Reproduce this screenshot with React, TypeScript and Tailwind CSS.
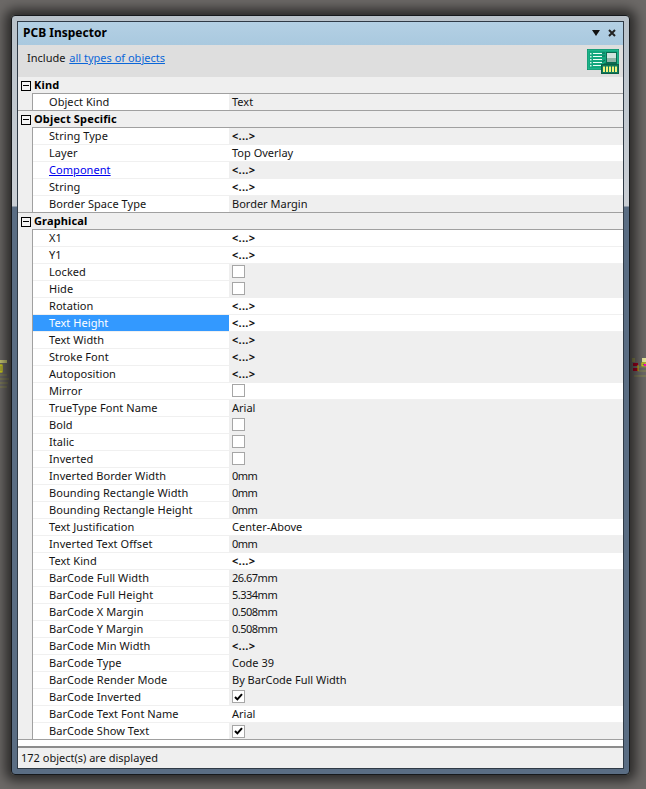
import React from "react";

type Row = { n: string; v?: string; c?: "off" | "on"; gray?: boolean; link?: boolean; sel?: boolean };

const M = "<...>";
const groups: { title: string; rows: Row[] }[] = [
  { title: "Kind", rows: [{ n: "Object Kind", v: "Text", gray: true }] },
  {
    title: "Object Specific",
    rows: [
      { n: "String Type", v: M, gray: true },
      { n: "Layer", v: "Top Overlay" },
      { n: "Component", v: M, gray: true, link: true },
      { n: "String", v: M },
      { n: "Border Space Type", v: "Border Margin", gray: true },
    ],
  },
  {
    title: "Graphical",
    rows: [
      { n: "X1", v: M },
      { n: "Y1", v: M },
      { n: "Locked", c: "off", gray: true },
      { n: "Hide", c: "off", gray: true },
      { n: "Rotation", v: M },
      { n: "Text Height", v: M, sel: true },
      { n: "Text Width", v: M, gray: true },
      { n: "Stroke Font", v: M, gray: true },
      { n: "Autoposition", v: M, gray: true },
      { n: "Mirror", c: "off" },
      { n: "TrueType Font Name", v: "Arial", gray: true },
      { n: "Bold", c: "off", gray: true },
      { n: "Italic", c: "off", gray: true },
      { n: "Inverted", c: "off", gray: true },
      { n: "Inverted Border Width", v: "0mm", gray: true },
      { n: "Bounding Rectangle Width", v: "0mm", gray: true },
      { n: "Bounding Rectangle Height", v: "0mm", gray: true },
      { n: "Text Justification", v: "Center-Above" },
      { n: "Inverted Text Offset", v: "0mm", gray: true },
      { n: "Text Kind", v: M },
      { n: "BarCode Full Width", v: "26.67mm", gray: true },
      { n: "BarCode Full Height", v: "5.334mm", gray: true },
      { n: "BarCode X Margin", v: "0.508mm", gray: true },
      { n: "BarCode Y Margin", v: "0.508mm", gray: true },
      { n: "BarCode Min Width", v: M, gray: true },
      { n: "BarCode Type", v: "Code 39", gray: true },
      { n: "BarCode Render Mode", v: "By BarCode Full Width", gray: true },
      { n: "BarCode Inverted", c: "on", gray: true },
      { n: "BarCode Text Font Name", v: "Arial" },
      { n: "BarCode Show Text", c: "on", gray: true },
    ],
  },
];

function Check({ on }: { on: boolean }) {
  return (
    <span className="ml-[3px] mt-[1px] flex h-[13px] w-[13px] items-center justify-center border border-[#a6a6a6] bg-white">
      {on && (
        <svg width="9" height="8" viewBox="0 0 9 8">
          <path d="M1 4 L3.4 6.4 L8 1.2" fill="none" stroke="#000" strokeWidth="2" />
        </svg>
      )}
    </span>
  );
}

function PropRow({ r, last }: { r: Row; last: boolean }) {
  const line = last ? "border-[#a0a0a0]" : "border-[#f0f0f0]";
  return (
    <div className={`flex h-[17px] w-full bg-[#efefef] ${last ? "border-b border-[#a0a0a0]" : ""}`}>
      <div className="w-[15px] shrink-0 border-r border-[#a0a0a0]" />
      <div className={`flex w-[196px] shrink-0 items-center pb-[1px] pl-[16px] tracking-[0.06px] ${last ? "" : "border-b pb-[2px]"} ${line} ${r.sel ? "bg-[#3399ff] text-white" : "bg-white"} `}>
        {r.link ? <span className="text-[#0000ee] underline">{r.n}</span> : r.n}
      </div>
      <div className={`flex flex-1 items-center pb-[1px] ${r.gray ? "bg-[#efefef]" : "bg-white"} ${last ? "" : `border-b pb-[2px] ${r.gray ? "border-[#efefef]" : "border-[#f0f0f0]"}`}`}>
        {r.c ? (
          <Check on={r.c === "on"} />
        ) : r.v === M ? (
          <span className="pl-[3px] text-[11px] font-bold tracking-[0.3px]">{"<...>"}</span>
        ) : r.v && r.v.endsWith("mm") ? (
          <span className="pl-[3px] tracking-[-0.5px]">{r.v}</span>
        ) : (
          <span className="pl-[3px]">{r.v}</span>
        )}
      </div>
    </div>
  );
}

function Group({ title, rows }: { title: string; rows: Row[] }) {
  return (
    <div>
      <div className="flex h-[17px] bg-[#efefef]">
        <div className="flex w-[14px] shrink-0 items-center justify-end pr-[1px]">
          <span className="flex h-[10px] w-[10px] items-center justify-center border border-black bg-[#f4f4f4]">
            <span className="h-px w-[6px] bg-black" />
          </span>
        </div>
        <div className="flex flex-1 items-center border-b border-[#a0a0a0] pb-[2px] pl-[2px] font-bold tracking-[0.15px] text-black">{title}</div>
      </div>
      {rows.map((r, i) => (
        <PropRow key={r.n} r={r} last={i === rows.length - 1} />
      ))}
    </div>
  );
}

function PcbIcon() {
  return (
    <svg width="32" height="25" viewBox="0 0 32 25" className="shrink-0">
      <rect x="0" y="0" width="32" height="21" fill="#0d8a68" />
      <rect x="1" y="1" width="30" height="19" fill="#12a77e" stroke="#3bd0a4" strokeWidth="0.6" />
      {[4, 7, 10, 13, 16].map((y) => (
        <g key={y}>
          <rect x="3" y={y} width="1.5" height="1.5" fill="#d8f5ea" />
          <rect x="6" y={y} width="9" height="1" fill="#ecfff7" />
        </g>
      ))}
      <path d="M15 4h3M15 7h3M15 13l3-2M15 16l4-2" stroke="#0a6b50" strokeWidth="1" />
      <rect x="19" y="3" width="11" height="12" fill="#0a6b50" />
      <rect x="20" y="4" width="9" height="9" fill="#cfe3dc" />
      <rect x="20" y="9" width="9" height="4" fill="#8fb5a8" />
      <rect x="14" y="15" width="18" height="10" fill="#0b5f46" />
      <rect x="15" y="16" width="16" height="8" fill="#0e7a5a" />
      {[16, 19, 22, 25, 28].map((x) => (
        <rect key={x} x={x} y="17.5" width="2" height="5.5" fill="#f2f27a" />
      ))}
    </svg>
  );
}

function BitsRight() {
  return (
    <svg width="14" height="22" viewBox="0 0 14 22">
      <rect x="0" y="0" width="3" height="4" fill="#8a8a50" />
      <rect x="10" y="0" width="4" height="4" fill="#e8e8a0" />
      <rect x="1" y="5" width="5" height="3" fill="#a00020" />
      <rect x="1" y="10" width="5" height="3" fill="#a00020" />
      <rect x="10" y="5" width="4" height="3" fill="none" stroke="#f0f000" />
      <rect x="12" y="6" width="2" height="2" fill="#ff00c0" />
      <path d="M6 9h8M6 13h8M2 18h12" stroke="#8a8a50" />
      <path d="M6 7v6" stroke="#d0c000" />
    </svg>
  );
}

function BitsLeft() {
  return (
    <svg width="9" height="32" viewBox="0 0 9 32">
      <rect x="0" y="0" width="7" height="3" fill="#c8c878" />
      <rect x="0" y="5" width="2" height="7" fill="none" stroke="#f0f000" />
      <path d="M0 15h7M0 19h9M0 23h8M0 27h7" stroke="#8a8a50" />
    </svg>
  );
}

export default function App() {
  return (
    <div
      className="relative h-[789px] w-[646px] overflow-hidden bg-[#6c6967] pl-[11px] pt-[15px] text-[11px] leading-none text-[#141414]"
      style={{ fontFamily: '"Noto Sans", "DejaVu Sans", sans-serif' }}
    >
      <div className="absolute left-0 top-[360px]">
        <BitsLeft />
      </div>
      <div className="absolute right-0 top-[358px]">
        <BitsRight />
      </div>
      <div className="relative flex h-[760px] w-[619px] flex-col rounded-[4px] border border-[#16191c] bg-[linear-gradient(180deg,#b9c2ca_0,#c9ced4_190px,#5a6d83_191px,#5a6d83_100%)] px-[5px] pb-[5px] pt-[5px] shadow-[0_0_12px_6px_rgba(0,0,0,0.6)]">
        <div className="flex flex-1 flex-col border border-[#2f3a46] bg-[#efefef]">
          <div className="flex h-[23px] items-center justify-between bg-[linear-gradient(180deg,#b4d0e4,#a9c9df)] pb-[2px] pl-[5px] pr-[7px]">
            <span className="text-[12px] font-bold text-black">PCB Inspector</span>
            <span className="flex items-center gap-[8px]">
              <svg width="8" height="6" viewBox="0 0 8 6">
                <path d="M0 0H8L4 6Z" fill="#111" />
              </svg>
              <svg width="8" height="8" viewBox="0 0 8 8">
                <path d="M1 1L7 7M7 1L1 7" stroke="#222" strokeWidth="2" />
              </svg>
            </span>
          </div>
          <div className="flex h-[32px] items-start justify-between bg-[#dedede] pl-[9px] pr-[4px] pt-[4px]">
            <span className="pt-[3px]">
              Include <span className="ml-[1px] text-[#0a66d8] underline">all types of objects</span>
            </span>
            <PcbIcon />
          </div>
          <div className="flex flex-col">
            {groups.map((g) => (
              <Group key={g.title} title={g.title} rows={g.rows} />
            ))}
          </div>
          <div className="h-[8px] border-b-2 border-[#8c8c8c] bg-white" />
          <div className="flex flex-1 items-center pb-[2px] pl-[3px]">172 object(s) are displayed</div>
        </div>
      </div>
    </div>
  );
}
